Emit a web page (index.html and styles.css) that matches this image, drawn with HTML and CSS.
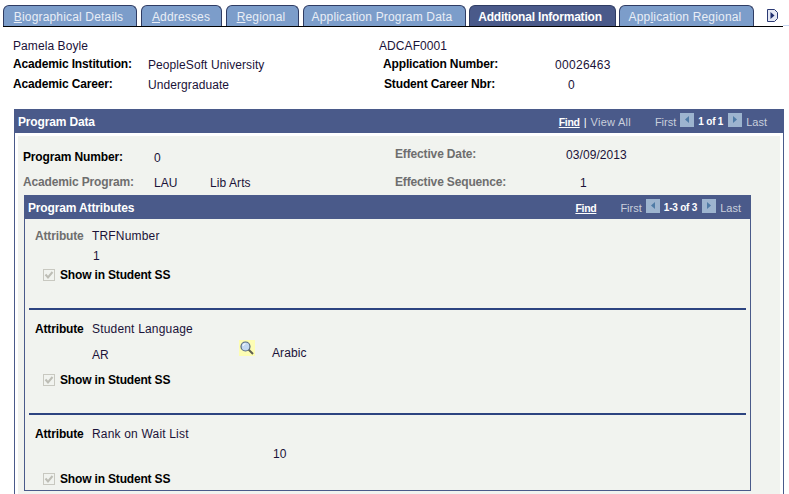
FILE: index.html
```html
<!DOCTYPE html>
<html lang="en">
<head>
<meta charset="utf-8">
<title>Additional Information</title>
<link rel="stylesheet" href="styles.css">
</head>
<body>
<nav class="tabs">
  <a class="tab w1"><u>B</u>iographical Details</a>
  <a class="tab w2"><u>A</u>ddresses</a>
  <a class="tab w3"><u>R</u>egional</a>
  <a class="tab w4">Application Program Data</a>
  <a class="tab w5 active">Additional Information</a>
  <a class="tab w6">App<u>l</u>ication Regional</a>
  <svg class="tab-arrow" width="13" height="15" viewBox="0 0 13 15"><path d="M1.500 1.500H8.500L11.500 4.500V10.500L8.500 13.500H1.500Z" fill="#e4e8f4" stroke="#2b3a74"/><path d="M4.500 4V11L8.500 7.500Z" fill="#1f2f6e"/></svg>
  <span class="tab-rest"></span>
</nav>

<section class="summary">
  <div class="sum-row r1"><span class="val">Pamela Boyle</span><span class="val">ADCAF0001</span></div>
  <div class="sum-row r2"><b class="lab">Academic Institution:</b><span class="val low">PeopleSoft University</span><b class="lab">Application Number:</b><span class="val low num">00026463</span></div>
  <div class="sum-row r3"><b class="lab">Academic Career:</b><span class="val low">Undergraduate</span><b class="lab c3b">Student Career Nbr:</b><span class="val c4b low">0</span></div>
</section>

<section class="grid outer">
  <header class="bar">
    <h2>Program Data</h2>
    <div class="pager">
      <a class="find">Find</a><span class="sep">|</span><span class="dim viewall">View All</span>
      <span class="dim first">First</span>
      <svg class="nav" width="14" height="14" viewBox="0 0 14 14"><rect width="14" height="14" fill="#9db4cf"/><path d="M9 3V10L5 6.500Z" fill="#4f7ba6"/></svg>
      <b class="count">1 of 1</b>
      <svg class="nav" width="14" height="14" viewBox="0 0 14 14"><rect width="14" height="14" fill="#9db4cf"/><path d="M5 3V10L9 6.500Z" fill="#4f7ba6"/></svg>
      <span class="dim">Last</span>
    </div>
  </header>
  <div class="outer-body">
    <div class="pd-row p1">
      <b class="lab">Program Number:</b><span class="val low pc2">0</span>
      <b class="lab dis pc4 high">Effective Date:</b><span class="val mid pc5">03/09/2013</span>
    </div>
    <div class="pd-row p2">
      <b class="lab dis">Academic Program:</b><span class="val low">LAU</span><span class="val low">Lib Arts</span>
      <b class="lab dis pc4">Effective Sequence:</b><span class="val low pc5 seq">1</span>
    </div>

    <section class="grid inner">
      <header class="bar">
        <h2>Program Attributes</h2>
        <div class="pager">
          <a class="find">Find</a>
          <span class="dim first">First</span>
          <svg class="nav" width="14" height="14" viewBox="0 0 14 14"><rect width="14" height="14" fill="#9db4cf"/><path d="M9 3V10L5 6.500Z" fill="#4f7ba6"/></svg>
          <b class="count">1-3 of 3</b>
          <svg class="nav" width="14" height="14" viewBox="0 0 14 14"><rect width="14" height="14" fill="#9db4cf"/><path d="M5 3V10L9 6.500Z" fill="#4f7ba6"/></svg>
          <span class="dim">Last</span>
        </div>
      </header>

      <article class="attr a1">
        <div class="attr-name"><b class="lab dis">Attribute</b><span class="val">TRFNumber</span></div>
        <div class="attr-val v1"><span class="val">1</span></div>
        <label class="show"><svg class="chk" width="12" height="12" viewBox="0 0 12 12"><rect x=".5" y=".5" width="11" height="11" fill="#f1f3ef" stroke="#c8c8c0"/><path d="M2.500 5.500L5 8.500L9.500 3" fill="none" stroke="#bdbdb5" stroke-width="2"/></svg><b>Show in Student SS</b></label>
      </article>

      <article class="attr a2">
        <div class="attr-name"><b class="lab">Attribute</b><span class="val">Student Language</span></div>
        <div class="attr-val v2">
          <span class="val code">AR</span>
          <span class="lookup"><svg width="16" height="16" viewBox="0 0 16 16"><rect width="16" height="16" fill="#fdfdb4"/><path d="M9.500 9.500L14 14" stroke="#5f5f50" stroke-width="2"/><circle cx="6.500" cy="6.500" r="4.500" fill="#c3d9f2" stroke="#54677f" stroke-width="1.200"/><path d="M4 6A2.500 2.500 0 0 1 6.500 3.800" fill="none" stroke="#fff"/></svg></span>
          <span class="val desc">Arabic</span>
        </div>
        <label class="show"><svg class="chk" width="12" height="12" viewBox="0 0 12 12"><rect x=".5" y=".5" width="11" height="11" fill="#f1f3ef" stroke="#c8c8c0"/><path d="M2.500 5.500L5 8.500L9.500 3" fill="none" stroke="#bdbdb5" stroke-width="2"/></svg><b>Show in Student SS</b></label>
      </article>

      <article class="attr a3">
        <div class="attr-name"><b class="lab">Attribute</b><span class="val">Rank on Wait List</span></div>
        <div class="attr-val v3"><span class="val">10</span></div>
        <label class="show"><svg class="chk" width="12" height="12" viewBox="0 0 12 12"><rect x=".5" y=".5" width="11" height="11" fill="#f1f3ef" stroke="#c8c8c0"/><path d="M2.500 5.500L5 8.500L9.500 3" fill="none" stroke="#bdbdb5" stroke-width="2"/></svg><b>Show in Student SS</b></label>
      </article>
    </section>
  </div>
</section>
</body>
</html>
```
FILE: styles.css
```css
* { box-sizing: border-box; }
html, body { margin: 0; height: 494px; overflow: hidden; background: #fff; }
body { font: 12px/14px "Liberation Sans", Arial, sans-serif; color: #000; }
b { font-weight: 700; letter-spacing: -.15px; }

/* Tabs */
.tabs { display: flex; height: 27px; padding: 5px 0 0 3px; align-items: flex-start; position: relative; }
.tab {
  display: block; height: 22px; margin-right: 4px; padding: 4px 3px 0 0; text-align: center;
  background: #7c9dca; color: #e9eef6; border: 1px solid #2f3c63; border-bottom: 1px solid #000;
  border-radius: 6px 6px 0 0; font-size: 12px; letter-spacing: .17px;
}
.tab.w1 { width: 134px; }
.tab.w2 { width: 81px; padding-right: 1px; }
.tab.w3 { width: 73px; }
.tab.w4 { width: 163px; margin-right: 3px; padding-right: 5px; }
.tab.w5 { width: 147px; margin-right: 3px; padding-right: 5px; }
.tab.w6 { width: 135px; margin-right: 12px; }
.tab.active { background: #4a5a8a; color: #fff; font-weight: 700; letter-spacing: -.2px; }
.tab-arrow { margin-top: 3px; }
.tab-rest { position: absolute; left: 3px; right: 0; top: 25px; height: 2px; background: linear-gradient(#000, #000) 0 1px / 780px 1px no-repeat, linear-gradient(#c8d8f0, #c8d8f0) 780px 0 / 6px 1px no-repeat; }

/* Summary */
.summary { padding-top: 11px; height: 82px; }
.sum-row { display: grid; grid-template-columns: 135px 235px 172px 1fr; padding-left: 13px; }
.r1 { height: 19px; padding-top: 1px; grid-template-columns: 366px 1fr; }
.r2 { height: 20px; }
.r3 { height: 20px; }
.val { color: #1a1238; letter-spacing: .08px; }
.val.num { letter-spacing: .3px; }
.lab { color: #000; }
.lab.dis { color: #6e6e6e; }
.low { position: relative; top: 1px; }
.high { position: relative; top: -3px; }
.mid { position: relative; top: -2px; }
.c3b { margin-left: 1px; }
.c4b { margin-left: 13px; }

/* Grids */
.grid { border: 1px solid #4a5a8a; }
.outer { width: 770px; margin-left: 14px; height: 400px; border-bottom: 0; }
.bar { display: flex; justify-content: space-between; align-items: center; background: #4a5a8a; color: #fff; margin: -1px -1px 0; padding: 1px 17px 0 4px; height: 24px; }
.inner .bar { padding-right: 10px; }
.bar h2 { margin: 0; font-size: 12px; line-height: 14px; font-weight: 700; letter-spacing: -.15px; }
.pager { display: flex; align-items: center; font-size: 11px; }
.find { color: #fff; text-decoration: underline; font-weight: 700; font-size: 10.500px; letter-spacing: -.3px; }
.sep { margin: 0 4px; color: #fff; }
.dim { color: #c9cfdc; }
.viewall { letter-spacing: .25px; }
.first { margin-left: 24px; }
.nav { margin: -3px 4px 0; }
.count { color: #fff; font-size: 10px; letter-spacing: -.2px; margin-right: 1px; }
.outer-body { margin: 3px 3px 0; background: #f1f3ef; height: 380px; padding: 11px 0 0 5px; }
.pd-row { display: grid; grid-template-columns: 131px 56px 185px 171px 1fr; white-space: nowrap; }
.p1 { height: 28px; padding-top: 3px; }
.p2 { height: 14px; }
.pc2 { grid-column: 2; }
.pc4 { grid-column: 4; }
.pc5 { grid-column: 5; }
.seq { padding-left: 14px; }

.inner { width: 727px; height: 296px; margin: 6px 0 0 1px; background: #f1f3ef; }

/* Attribute rows */
.attr { margin: 0 4px; padding-left: 6px; }
.a1 { height: 91px; padding-top: 10px; border-bottom: 2px solid #2d4480; }
.a2 { height: 105px; padding-top: 12px; border-bottom: 2px solid #2d4480; }
.a3 { height: 70px; padding-top: 12px; }
.attr-name { display: flex; height: 14px; }
.attr-name .lab { width: 57px; flex: none; }
.attr-name .val { letter-spacing: .18px; }
.v1 { padding: 6px 0 0 58px; height: 20px; }
.v2 { height: 30px; display: flex; padding-left: 57px; }
.code { margin-top: 12px; width: 147px; }
.lookup { display: block; width: 33px; margin-top: 4px; height: 16px; }
.desc { margin-top: 10px; }
.v3 { padding: 6px 0 0 238px; height: 20px; }
.show { display: flex; align-items: center; gap: 5px; margin-left: 8px; height: 14px; }
.show b { letter-spacing: -.17px; }
.a1 .show { margin-top: 5px; }
.a2 .show { margin-top: 7px; }
.a3 .show { margin-top: 11px; }
.chk { flex: none; }
```
